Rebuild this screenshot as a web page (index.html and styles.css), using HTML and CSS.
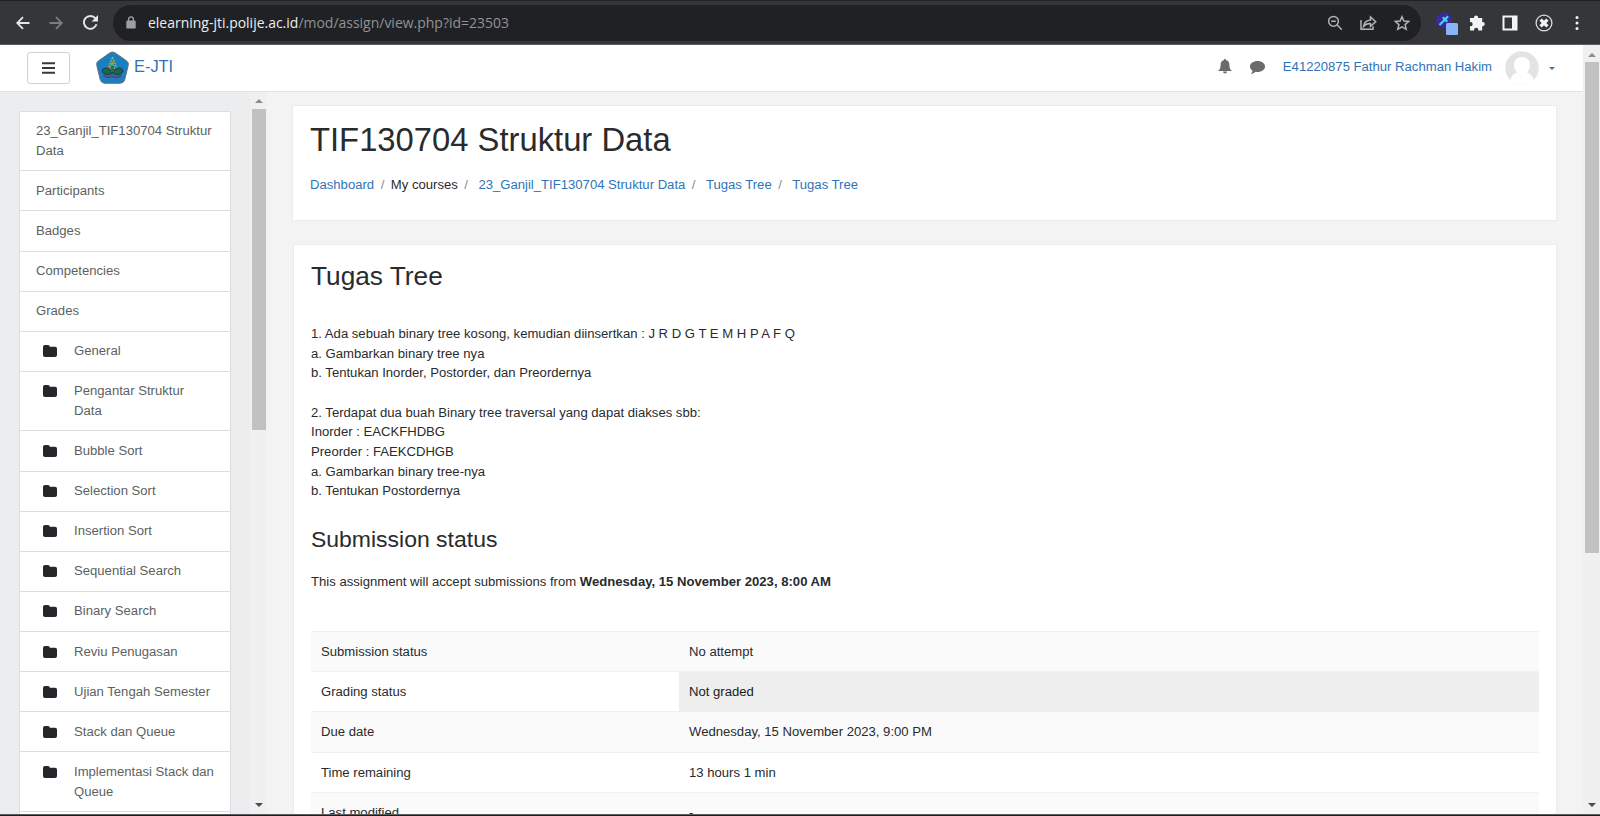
FILE: index.html
```html
<!DOCTYPE html>
<html lang="en">
<head>
<meta charset="utf-8">
<title>TIF130704 Struktur Data: Tugas Tree</title>
<link rel="stylesheet" href="styles.css">
</head>
<body>
<svg class="defs" width="0" height="0">
  <symbol id="folder" viewBox="0 0 14 12"><path d="M0 2C0 .8.8 0 2 0h3c1 0 1.700.8 1.700 1.800H12c1.200 0 2 .8 2 2V10c0 1.200-.8 2-2 2H2c-1.200 0-2-.8-2-2z"/></symbol>
</svg>

<div class="browser">
  <svg class="nav-icon back" viewBox="0 0 14 14"><path d="M13.500 7H1.500M7 1.200 1.200 7 7 12.800"/></svg>
  <svg class="nav-icon forward" viewBox="0 0 14 14"><path d="M.5 7h12M7 1.200 12.800 7 7 12.800"/></svg>
  <svg class="nav-icon reload" viewBox="0 0 14 14"><path d="M11.600 3.200A6 6 0 1 0 12.600 8.700"/><path class="solid" d="M14 0v6H8z"/></svg>
  <div class="address">
    <svg class="lock" viewBox="0 0 10 13"><path d="M2.600 5V3.300a2.400 2.400 0 0 1 4.800 0V5" fill="none" stroke="#9aa0a6" stroke-width="1.400"/><rect x=".3" y="4.600" width="9.400" height="8" rx="1.200" fill="#9aa0a6"/></svg>
    <div class="url"><span class="host">elearning-jti.polije.ac.id</span><span class="path">/mod/assign/view.php?id=23503</span></div>
    <div class="address-tools">
      <svg width="16" height="16" viewBox="0 0 16 16"><circle cx="6.500" cy="6.300" r="4.900"/><path d="M10 9.800 14.800 14.800M4.200 6.300h4.600"/></svg>
      <svg width="17" height="16" viewBox="0 0 17 16"><path d="M1 5v9.300h12v-3M3.500 11.500C4 7.500 6.500 5.300 10.500 5V2l5.200 4.700-5.200 4.600V8.500C7.500 8.400 5.200 9.400 3.500 11.500z"/></svg>
      <svg width="16" height="16" viewBox="0 0 16 16"><path d="m8 1.700 1.900 4.400 4.800.4-3.600 3.100 1.100 4.700L8 11.800l-4.200 2.500 1.100-4.700L1.300 6.500l4.800-.4z"/></svg>
    </div>
  </div>
  <div class="extensions">
    <svg width="24" height="24" viewBox="0 0 24 24"><circle cx="9" cy="9.500" r="8" fill="#3b2a9c"/><path d="M4.500 14 10 8.500M7.800 6.300l4.500 4.500M10 8.500l3-3.200" stroke="#45d4f2" stroke-width="2.200" fill="none"/><rect x="11" y="12" width="12" height="12" rx="1.500" fill="#8ab4f8"/></svg>
    <svg class="puzzle" width="16" height="16" viewBox="0 0 16 16"><path fill="#f1f3f4" d="M1 3h4v-.5a2.100 2.100 0 0 1 4.200 0V3h4v4h.5a2.100 2.100 0 0 1 0 4.200h-.5v4.300H9.300v-.7a2.100 2.100 0 0 0-4.200 0v.7H1v-4.200h.6a2.100 2.100 0 0 0 0-4.200H1z"/></svg>
    <svg class="panel" width="16" height="16" viewBox="0 0 16 16"><path fill="#f1f3f4" fill-rule="evenodd" d="M.5.500h15v15H.5zM2.500 2.500v11H10v-11z"/></svg>
    <svg class="profile" width="18" height="18" viewBox="0 0 18 18"><circle cx="9" cy="9" r="7.900" fill="none" stroke="#d8dadc" stroke-width="1.300"/><path d="m5.600 5.600 6.800 6.800M12.400 5.600l-6.800 6.800" stroke="#f1f3f4" stroke-width="3.300" fill="none"/></svg>
    <svg class="more" width="4" height="16" viewBox="0 0 4 16" fill="#f1f3f4"><circle cx="2" cy="2.500" r="1.500"/><circle cx="2" cy="8" r="1.500"/><circle cx="2" cy="13.500" r="1.500"/></svg>
  </div>
</div>

<div class="viewport">
  <div class="page">
    <header class="topbar">
      <button class="menu-toggle"><svg width="13" height="12" viewBox="0 0 13 12"><path d="M0 1.200h13M0 6h13M0 10.800h13" stroke="#343a40" stroke-width="2"/></svg></button>
      <a class="brand">
        <svg class="logo" viewBox="0 0 33 33">
          <path d="M14 1.800Q16.500.2 19 1.800L30.500 9.800Q33 11.700 32.200 14.500L28.800 28.500Q27.800 32.300 24 32.300H9Q5.200 32.300 4.200 28.500L.8 14.500Q0 11.700 2.500 9.800z" fill="#1a7fc0" stroke="#66737d" stroke-width="1"/>
          <path d="M11.500 19 16.500 6 21.500 19M14 19l2.500-8 2.500 8" fill="none" stroke="#9fae52" stroke-width="1.600" stroke-dasharray="1.800 1"/>
          <path d="M16.500 21.500C13 16 8 16 6 19.500c2 5 7.500 5 10.500 2 3 3 8.500 3 10.500-2-2-3.500-7-3.500-10.500 2z" fill="#176b4c" stroke="#1d4350" stroke-width="1.200"/>
          <path d="M7.500 24Q12 28 16.500 25 21 28 25.500 24" fill="none" stroke="#4e4a78" stroke-width="2"/>
          <path d="M15 15h3v6h-3z" fill="#187846"/>
        </svg>
        <span>E-JTI</span>
      </a>
      <div class="user-tools">
        <svg class="bell" viewBox="0 0 14 15"><path d="M7 0c.7 0 1 .5 1 1.100C10.500 1.700 11.400 3.600 11.400 6c0 3.200.9 4.700 2.600 6H0c1.700-1.300 2.600-2.800 2.600-6C2.600 3.600 3.500 1.700 6 1.100 6 .5 6.300 0 7 0zM5 12.500h4a2 2 0 0 1-4 0z"/></svg>
        <svg class="chat" viewBox="0 0 15 13"><path d="M7.500 0C11.700 0 15 2.400 15 5.500S11.700 11 7.500 11q-1 0-1.900-.2C4.300 12.100 2.500 12.800.8 13c1-.9 1.700-2 1.700-3.300C.9 8.700 0 7.200 0 5.500 0 2.400 3.300 0 7.500 0z"/></svg>
        <a class="user-name">E41220875 Fathur Rachman Hakim</a>
        <svg class="avatar" viewBox="0 0 34 34"><defs><clipPath id="round"><circle cx="17" cy="17" r="16.700"/></clipPath></defs><g clip-path="url(#round)"><path d="M0 0h34v34H0z" fill="#e3e3e3"/><path d="M17 6c5 0 8 3.300 8 8.200 0 3.300-1.300 5.800-3.300 7.200C26 22.500 28.500 25.500 30 34H4c1.500-8.500 4-11.500 8.300-12.600C10.300 20 9 17.500 9 14.200 9 9.300 12 6 17 6z" fill="#fff"/></g></svg>
        <span class="caret"></span>
      </div>
    </header>

    <div class="columns">
      <aside class="drawer">
        <ul class="nav-list">
          <li>23_Ganjil_TIF130704 Struktur Data</li>
          <li>Participants</li>
          <li>Badges</li>
          <li>Competencies</li>
          <li>Grades</li>
          <li class="section"><svg><use href="#folder"/></svg><span>General</span></li>
          <li class="section"><svg><use href="#folder"/></svg><span>Pengantar Struktur<br>Data</span></li>
          <li class="section"><svg><use href="#folder"/></svg><span>Bubble Sort</span></li>
          <li class="section"><svg><use href="#folder"/></svg><span>Selection Sort</span></li>
          <li class="section"><svg><use href="#folder"/></svg><span>Insertion Sort</span></li>
          <li class="section"><svg><use href="#folder"/></svg><span>Sequential Search</span></li>
          <li class="section"><svg><use href="#folder"/></svg><span>Binary Search</span></li>
          <li class="section"><svg><use href="#folder"/></svg><span>Reviu Penugasan</span></li>
          <li class="section"><svg><use href="#folder"/></svg><span>Ujian Tengah Semester</span></li>
          <li class="section"><svg><use href="#folder"/></svg><span>Stack dan Queue</span></li>
          <li class="section"><svg><use href="#folder"/></svg><span>Implementasi Stack dan<br>Queue</span></li>
          <li class="section"></li>
        </ul>
      </aside>
      <div class="scrollbar drawer-scroll"><i class="up"></i><b></b><i class="down"></i></div>

      <main class="content">
        <section class="card heading-card">
          <h1>TIF130704 Struktur Data</h1>
          <nav class="crumbs"><a>Dashboard</a><i>/</i><span>My courses</span><i>/</i><a class="wide">23_Ganjil_TIF130704 Struktur Data</a><i>/</i><a class="wide">Tugas Tree</a><i>/</i><a class="wide">Tugas Tree</a></nav>
        </section>
        <section class="card body-card">
          <h2>Tugas Tree</h2>
          <p class="question">1. Ada sebuah binary tree kosong, kemudian diinsertkan : J R D G T E M H P A F Q<br>a. Gambarkan binary tree nya<br>b. Tentukan Inorder, Postorder, dan Preordernya<br><br>2. Terdapat dua buah Binary tree traversal yang dapat diakses sbb:<br>Inorder : EACKFHDBG<br>Preorder : FAEKCDHGB<br>a. Gambarkan binary tree-nya<br>b. Tentukan Postordernya</p>
          <h3>Submission status</h3>
          <p class="opens">This assignment will accept submissions from <strong>Wednesday, 15 November 2023, 8:00 AM</strong></p>
          <div class="status">
            <div class="row"><span>Submission status</span><span>No attempt</span></div>
            <div class="row"><span>Grading status</span><span class="graded">Not graded</span></div>
            <div class="row"><span>Due date</span><span>Wednesday, 15 November 2023, 9:00 PM</span></div>
            <div class="row"><span>Time remaining</span><span>13 hours 1 min</span></div>
            <div class="row"><span>Last modified</span><span>-</span></div>
          </div>
        </section>
      </main>
    </div>
  </div>
  <div class="scrollbar page-scroll"><i class="up"></i><b></b><i class="down"></i></div>
</div>
</body>
</html>
```
FILE: styles.css
```css
* { box-sizing: border-box; }
html { font-size: 13.125px; }
body {
  margin: 0;
  width: 1600px;
  height: 816px;
  overflow: hidden;
  display: flex;
  flex-direction: column;
  font-family: "Liberation Sans", Arial, sans-serif;
  line-height: 1.5;
  color: #292b2c;
  background: #f3f3f3;
  border-bottom: 1px solid #211b26;
}
.defs { position: absolute; }
h1, h2, h3, p, ul { margin: 0; padding: 0; font-weight: 400; }
a { color: #2f74b8; }

/* Browser toolbar */
.browser {
  flex: none;
  height: 45px;
  background: #35363a;
  border-top: 1px solid #202124;
  border-bottom: 1px solid #5c5c5c;
  display: flex;
  align-items: center;
  padding: 0 21px 0 16px;
}
.nav-icon { width: 14px; height: 14px; fill: none; stroke: #e4e6e8; stroke-width: 1.800; margin-right: 19px; }
.nav-icon.forward { stroke: #7c7d80; margin-right: 20px; }
.nav-icon.reload { margin-right: 15px; width: 15px; height: 15px; }
.nav-icon .solid { fill: #e4e6e8; stroke: none; }
.address {
  flex: none;
  width: 1308px;
  height: 36px;
  border-radius: 18px;
  background: #202124;
  display: flex;
  align-items: center;
  padding: 0 11px 0 13px;
}
.lock { width: 10px; height: 13px; margin-right: 12px; }
.url { flex: 1; padding-top: 2px; font-family: "Open Sans", sans-serif; font-size: 13.980px; color: #8f9296; white-space: nowrap; }
.url .host { color: #eceef0; }
.address-tools { display: flex; gap: 17px; }
.address-tools svg { fill: none; stroke: #b0b3b7; stroke-width: 1.500; }
.extensions { display: flex; align-items: center; flex: 1; padding-left: 14px; }
.puzzle { margin-left: 10px; }
.panel { margin-left: 17px; }
.profile { margin-left: 17px; }
.more { margin-left: auto; }

/* Page frame */
.viewport { flex: 1; display: flex; min-height: 0; border-bottom: 1px solid #5f5d63; }
.page { flex: 1; min-width: 0; display: flex; flex-direction: column; }
.topbar {
  flex: none;
  height: 47px;
  background: #fff;
  border-bottom: 1px solid #e0e1e2;
  display: flex;
  align-items: center;
  padding: 0 28px 2px 27px;
}
.menu-toggle {
  width: 43px;
  height: 32px;
  padding: 0;
  border: 1px solid #cfd2d4;
  border-radius: 3px;
  background: #fff;
  display: flex;
  align-items: center;
  justify-content: center;
  margin-top: 1px;
}
.brand { display: flex; align-items: center; margin-left: 26px; font-size: 16.400px; }
.brand span { padding-bottom: 1px; }
.logo { width: 33px; height: 33px; margin: 1px 5px 0 0; }
.user-tools { margin-left: auto; display: flex; align-items: center; }
.bell { width: 14px; height: 15px; fill: #6b6b6b; margin: 0 18px 2px 0; }
.chat { width: 15px; height: 13px; fill: #6b6b6b; margin-right: 18px; }
.user-name { font-size: 13.125px; white-space: nowrap; }
.avatar { width: 34px; height: 34px; margin: 1px 10px 0 13px; }
.caret { border: 3.500px solid transparent; border-top-color: #2f74b8; border-bottom: 0; margin-top: 2px; }
.columns { flex: 1; min-height: 0; display: flex; }

/* Course navigation */
.drawer { width: 250px; background: #ebedef; padding: 18.700px 20px 0 19px; overflow: hidden; flex: none; }
.nav-list {
  width: 212px;
  list-style: none;
  background: #fff;
  border: 1px solid #dcdddf;
  border-radius: 2px 2px 0 0;
  color: #5d5f61;
  font-size: 13.125px;
}
.nav-list li { padding: 9.640px 14px 9.600px 16px; border-bottom: 1px solid #dcdddf; line-height: 19.690px; min-height: 40.110px; }
.section { display: flex; }
.section svg { flex: none; width: 14px; height: 12px; fill: #25272a; margin: 4px 17px 0 7px; }
.section span { margin-right: -4px; white-space: nowrap; }

/* Scrollbars */
.scrollbar { flex: none; background: #f0f0f0; display: flex; flex-direction: column; align-items: center; }
.scrollbar i { border: 4px solid transparent; }
.scrollbar .up { border-bottom-color: #8e8e8e; border-top: 0; }
.scrollbar .down { border-top-color: #4b4b4b; border-bottom: 0; margin-top: auto; }
.scrollbar b { background: #c1c1c1; width: 14px; }
.drawer-scroll { width: 17px; padding: 7px 0 7px 1px; }
.drawer-scroll b { height: 321px; margin-top: 6px; }
.page-scroll { width: 17px; padding: 8px 0 7px; }
.page-scroll b { height: 491px; margin-top: 5px; }

/* Main column */
.content { flex: 1; padding: 13px 26px 0 25px; overflow: hidden; min-width: 0; }
.card { background: #fff; border: 1px solid #ececec; }
.heading-card { height: 116px; padding: 14px 17px 0 17px; }
h1 { font-size: 32.780px; line-height: 39.400px; }
.crumbs { display: flex; margin-top: 16px; font-size: 13.125px; white-space: nowrap; }
.crumbs i { font-style: normal; color: #868e96; margin: 0 6.500px; }
.crumbs .wide { margin-left: 3.900px; }
.body-card { margin: 23px 0 0 1px; padding: 16px 17px 0 17px; height: 640px; }
h2 { font-size: 26.250px; line-height: 31.500px; }
.question { margin-top: 31.500px; font-size: 13.125px; line-height: 19.670px; white-space: nowrap; }
h3 { font-size: 22.970px; line-height: 27.600px; margin-top: 25px; }
.opens { margin-top: 18.500px; font-size: 13.125px; white-space: nowrap; }
.status { margin-top: 39px; font-size: 13.125px; border-bottom: 1px solid #f0f0f0; }
.row { height: 40.300px; display: flex; border-top: 1px solid #f0f0f0; }
.row:nth-child(odd) { background: #fafafa; }
.row span { padding: 10px 10px 0; flex: 1; }
.row span:first-child { flex: 0 0 368px; }
.row .graded { background: #eee; color: #1b1b1b; }
```
